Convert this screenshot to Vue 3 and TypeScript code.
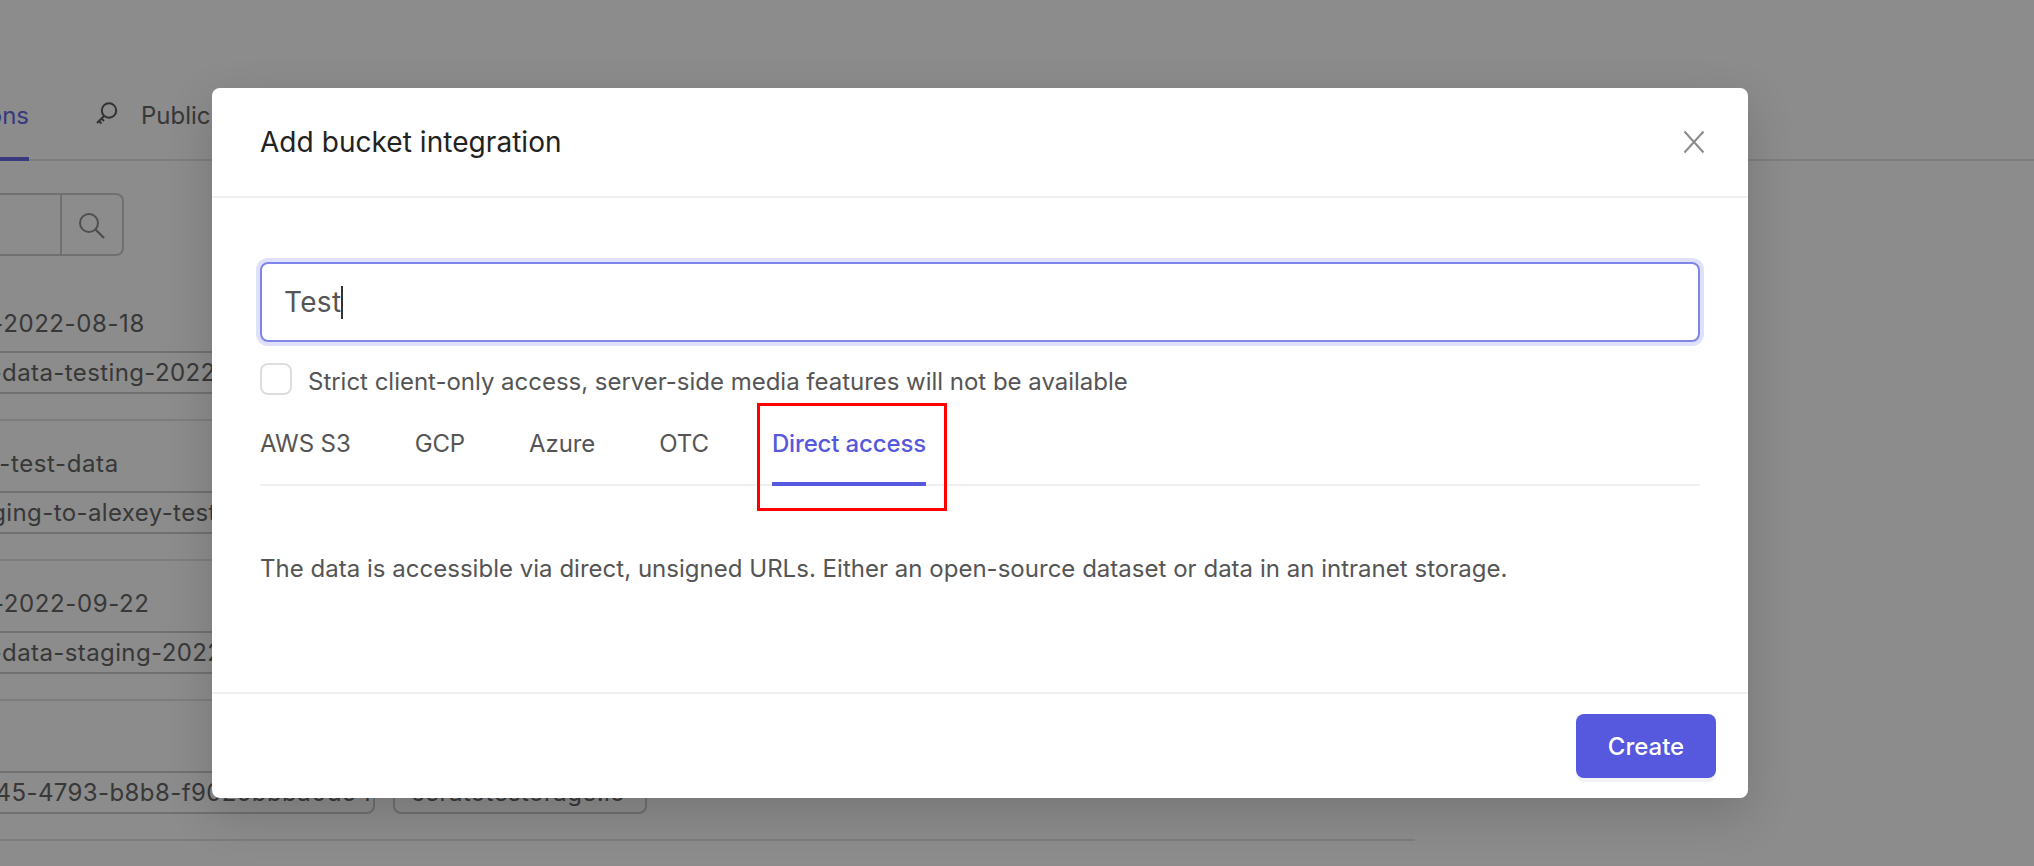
<script setup lang="ts">
interface Row { title: string; titleShift: number; tag: string; tagShift: number; second?: string }

const rows: Row[] = [
  { title: 'alexey-test-data-2022-08-18', titleShift: -202, tag: 'serverless-data-testing-2022-08-18', tagShift: -131 },
  { title: 'alexey-staging-test-data', titleShift: -175, tag: 'copy-from-staging-to-alexey-test-data', tagShift: -178 },
  { title: 'alexey-staging-data-2022-09-22', titleShift: -245, tag: 'serverless-data-staging-2022-09-22', tagShift: -131 },
  { title: 'ceratotest', titleShift: 240, tag: '8c1f40d2-5b45-4793-b8b8-f9025bbba0d54', tagShift: -154, second: 'ceratotestorage.io' }
]

const providers = ['AWS S3', 'GCP', 'Azure', 'OTC']
</script>

<template>
  <div class="screen">
    <div class="page">
      <nav class="page-tabs">
        <span class="page-tab page-tab-active">Integrations</span>
        <span class="page-tab">
          <svg class="key" width="24" height="26" viewBox="0 0 24 26" fill="none">
            <circle cx="14" cy="9.5" r="7.2" stroke="#5c5c5c" stroke-width="2" />
            <path d="M9 15 L2 22 M4 20 L6.5 22.5 M6.5 17.5 L9 20" stroke="#5c5c5c" stroke-width="2" />
          </svg>
          Public keys
        </span>
      </nav>

      <div class="search">
        <div class="search-field"></div>
        <div class="search-btn">
          <svg width="28" height="28" viewBox="0 0 28 28" fill="none">
            <circle cx="11" cy="11" r="9" stroke="#8f8f8f" stroke-width="2" />
            <path d="M17.5 17.5 L26 26" stroke="#8f8f8f" stroke-width="2.4" />
          </svg>
        </div>
      </div>

      <ul class="rows">
        <li v-for="row in rows" :key="row.tag" class="row">
          <div class="row-title" :style="{ marginLeft: row.titleShift + 'px' }">{{ row.title }}</div>
          <div class="row-tags">
            <span class="tag tag-first">
              <span :style="{ marginLeft: row.tagShift + 'px' }">{{ row.tag }}</span>
            </span>
            <span v-if="row.second" class="tag">{{ row.second }}</span>
          </div>
        </li>
      </ul>
    </div>

    <div class="overlay"></div>

    <section class="modal">
      <header class="modal-head">
        <h2 class="modal-title">Add bucket integration</h2>
        <svg class="close" width="22" height="24" viewBox="0 0 22 24" fill="none">
          <path d="M1.5 1.5 L20.5 22.5 M20.5 1.5 L1.5 22.5" stroke="#8a8a8a" stroke-width="2" />
        </svg>
      </header>

      <div class="modal-body">
        <div class="name-input"><span>Test</span><i class="caret"></i></div>

        <label class="check">
          <span class="check-box"></span>
          <span class="check-text">Strict client-only access, server-side media features will not be available</span>
        </label>

        <div class="tabs">
          <span v-for="p in providers" :key="p" class="tab">{{ p }}</span>
          <span class="tab tab-active">
            Direct access
            <span class="annotation"></span>
          </span>
        </div>

        <p class="desc">The data is accessible via direct, unsigned URLs. Either an open-source dataset or data in an intranet storage.</p>
      </div>

      <footer class="modal-foot">
        <button class="create" type="button">Create</button>
      </footer>
    </section>
  </div>
</template>

<style>
html, body { margin: 0; background: #fff; }
</style>

<style scoped>
.screen {
  position: relative;
  width: 2034px;
  height: 866px;
  overflow: hidden;
  background: #fff;
  font-family: Inter, "Noto Sans", sans-serif;
  color: #666;
}
.page { width: 2034px; }
.page-tabs {
  display: flex;
  height: 159px;
  gap: 68px;
  border-bottom: 2px solid #e3e3e3;
  margin-left: -130px;
  width: 2164px;
}
.page-tab {
  display: flex;
  align-items: center;
  gap: 22px;
  height: 161px;
  padding-top: 69px;
  box-sizing: border-box;
  font-size: 24px;
  white-space: nowrap;
}
.key { margin: -2px 0 0 -2px; }
.page-tab-active {
  color: #6668e6;
  width: 159px;
  justify-content: flex-end;
  box-shadow: inset 0 -4px 0 #6668e6;
}
.search {
  display: flex;
  width: 124px;
  height: 63px;
  margin-top: 32px;
  box-sizing: border-box;
  border: 2px solid #ccc;
  border-left: 0;
  border-radius: 0 8px 8px 0;
}
.search-field { width: 60px; border-right: 2px solid #ccc; }
.search-btn { flex: 1; display: flex; align-items: center; justify-content: center; }
.search-btn svg { margin-top: 2px; }
.rows { list-style: none; margin: 25px 0 0; padding: 0; width: 1415px; }
.row {
  height: 140px;
  box-sizing: border-box;
  padding-top: 28px;
  border-bottom: 2px solid #e3e3e3;
}
.row-title { font-size: 24px; line-height: 30px; white-space: nowrap; letter-spacing: .6px; }
.row-tags { display: flex; gap: 18px; margin-top: 12px; }
.tag {
  display: block;
  height: 43px;
  line-height: 39px;
  box-sizing: border-box;
  border: 2px solid #ccc;
  border-radius: 8px;
  padding: 0 20px 0 16px;
  font-size: 24px;
  white-space: nowrap;
  letter-spacing: .4px;
}
.tag-first {
  width: 375px;
  flex: none;
  overflow: hidden;
  border-left: 0;
  border-radius: 0 8px 8px 0;
  padding: 0;
}
.overlay { position: absolute; inset: 0; background: rgba(0, 0, 0, .45); }
.modal {
  position: absolute;
  left: 212px;
  top: 88px;
  width: 1536px;
  height: 710px;
  display: flex;
  flex-direction: column;
  background: #fff;
  border-radius: 8px;
  box-shadow: 0 16px 48px rgba(0, 0, 0, .16);
}
.modal-head {
  height: 110px;
  box-sizing: border-box;
  border-bottom: 2px solid #f0f0f0;
  display: flex;
  align-items: center;
  justify-content: space-between;
  padding: 0 43px 0 48px;
}
.modal-title {
  margin: 0;
  font-size: 28px;
  font-weight: 400;
  letter-spacing: .05px;
  color: #222;
}
.modal-body {
  flex: 1;
  padding: 64px 48px 0;
  border-bottom: 2px solid #f0f0f0;
  color: #555;
}
.name-input {
  height: 80px;
  box-sizing: border-box;
  display: flex;
  align-items: center;
  padding-left: 22px;
  border: 2px solid #7f83ea;
  border-radius: 8px;
  box-shadow: 0 0 0 4px #dfe0fa;
  font-size: 28px;
  letter-spacing: .3px;
}
.caret { display: block; width: 2px; height: 33px; background: #333; }
.check {
  display: flex;
  align-items: flex-start;
  gap: 16px;
  margin-top: 21px;
  font-size: 24px;
  line-height: 32px;
  letter-spacing: -.02px;
}
.check-text { padding-top: 3px; }
.check-box {
  width: 32px;
  height: 32px;
  box-sizing: border-box;
  border: 2px solid #dedede;
  border-radius: 8px;
  flex: none;
}
.tabs {
  display: flex;
  gap: 64px;
  height: 86px;
  margin-top: 2px;
  border-bottom: 2px solid #f0f0f0;
  box-sizing: border-box;
}
.tab {
  position: relative;
  display: flex;
  align-items: center;
  font-size: 24px;
  letter-spacing: -.1px;
  height: 84px;
  padding-top: 2px;
  box-sizing: border-box;
}
.tab-active {
  color: #5658dd;
  font-weight: 500;
  letter-spacing: -.15px;
  height: 86px;
  margin-left: -1px;
  padding-top: 0;
  box-shadow: inset 0 -4px 0 #5658dd;
}
.annotation {
  position: absolute;
  left: -15px;
  right: -21px;
  top: 3px;
  bottom: -25px;
  border: 3px solid #f00;
}
.desc { margin: 0; padding-top: 68px; font-size: 24px; line-height: 30px; letter-spacing: .02px; }
.modal-foot {
  height: 104px;
  flex: none;
  box-sizing: border-box;
  display: flex;
  justify-content: flex-end;
  padding: 20px 32px 0 0;
}
.create {
  width: 140px;
  height: 64px;
  border: 0;
  border-radius: 8px;
  background: #5658dd;
  color: #fff;
  font: 500 24px Inter, sans-serif;
  box-shadow: 0 4px 0 #f2f2f4;
}
</style>
